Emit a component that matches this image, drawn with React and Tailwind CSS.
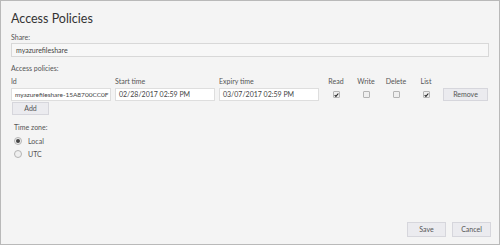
const font = { fontFamily: 'Lato, "Noto Sans", sans-serif' };

const Checkbox = ({ checked }) => (
  <div className="flex h-[13px] items-center justify-center">
    <div className="flex h-[7px] w-[7px] items-center justify-center rounded-[1px] border border-[#b4b4b4] bg-[#efefef]">
      {checked && (
        <svg width="6" height="6" viewBox="0 0 6 6">
          <path d="M0.8 3.2 L2.3 4.7 L5.2 1.2" fill="none" stroke="#222" strokeWidth="1.3" />
        </svg>
      )}
    </div>
  </div>
);

const Radio = ({ checked, label }) => (
  <div className="flex h-[12px] items-center gap-[6px] pl-[2px]">
    <div className="flex h-[8px] w-[8px] items-center justify-center rounded-full border border-[#b4b4b4] bg-[#efefef]">
      {checked && <div className="h-[4px] w-[4px] rounded-full bg-[#444]" />}
    </div>
    <span className="text-[7px] leading-[10px] text-[#555]">{label}</span>
  </div>
);

const Input = ({ value, className = "" }) => (
  <div
    className={`flex h-[13px] items-center overflow-hidden whitespace-nowrap border border-[#dedede] bg-white px-[3px] text-[#444] ${className}`}
  >
    {value}
  </div>
);

const Button = ({ children, className = "" }) => (
  <button
    className={`flex items-center justify-center border border-[#d6d6dc] bg-[#ebebef] text-[7px] text-[#555] ${className}`}
  >
    {children}
  </button>
);

export default function App() {
  const labels = ["Id", "Start time", "Expiry time"];
  return (
    <div
      style={font}
      className="flex h-[245px] w-[500px] flex-col border border-[#b9b9b9] bg-[#f4f4f4] px-[10px] pt-[8px] pb-[7px]"
    >
      <h1 className="h-[20px] text-[12.5px] leading-[20px] text-[#333]">Access Policies</h1>
      <div className="mt-[3px] text-[7px] leading-[10px] text-[#555]">Share:</div>
      <div className="mt-[1px] flex h-[14px] items-center border border-[#d8d8d8] bg-[#f7f7f7] px-[4px] text-[7px] text-[#444]">
        myazurefileshare
      </div>
      <div className="mt-[6px] text-[7px] leading-[10px] text-[#555]">Access policies:</div>

      <div className="mt-[3px] grid grid-cols-[100px_100px_100px_26px_26px_26px_26px_45px] gap-x-[4px]">
        {labels.map((l) => (
          <div key={l} className="text-[7px] leading-[10px] text-[#555]">
            {l}
          </div>
        ))}
        {["Read", "Write", "Delete", "List"].map((l) => (
          <div key={l} className="text-center text-[7px] leading-[10px] text-[#555]">
            {l}
          </div>
        ))}
        <div />
        <Input value="myazurefileshare-15A8700CC0F" className="mt-[2px] text-[6.5px]" />
        <Input value="02/28/2017 02:59 PM" className="mt-[2px] text-[7px]" />
        <Input value="03/07/2017 02:59 PM" className="mt-[2px] text-[7px]" />
        <div className="mt-[2px]"><Checkbox checked /></div>
        <div className="mt-[2px]"><Checkbox /></div>
        <div className="mt-[2px]"><Checkbox /></div>
        <div className="mt-[2px]"><Checkbox checked /></div>
        <Button className="mt-[2px] h-[13px]">Remove</Button>
      </div>

      <Button className="mt-[1px] ml-[1px] h-[13px] w-[37px] border-[#a9bddb] bg-[#e4e8f0]">Add</Button>

      <div className="mt-[7px] pl-[3px] text-[7px] leading-[10px] text-[#555]">Time zone:</div>
      <div className="mt-[3px] pl-[1px]">
        <Radio checked label="Local" />
      </div>
      <div className="mt-[1px] pl-[1px]">
        <Radio label="UTC" />
      </div>

      <div className="-mr-[2px] mt-auto flex justify-end gap-[6px]">
        <Button className="h-[15px] w-[39px]">Save</Button>
        <Button className="h-[15px] w-[39px]">Cancel</Button>
      </div>
    </div>
  );
}
